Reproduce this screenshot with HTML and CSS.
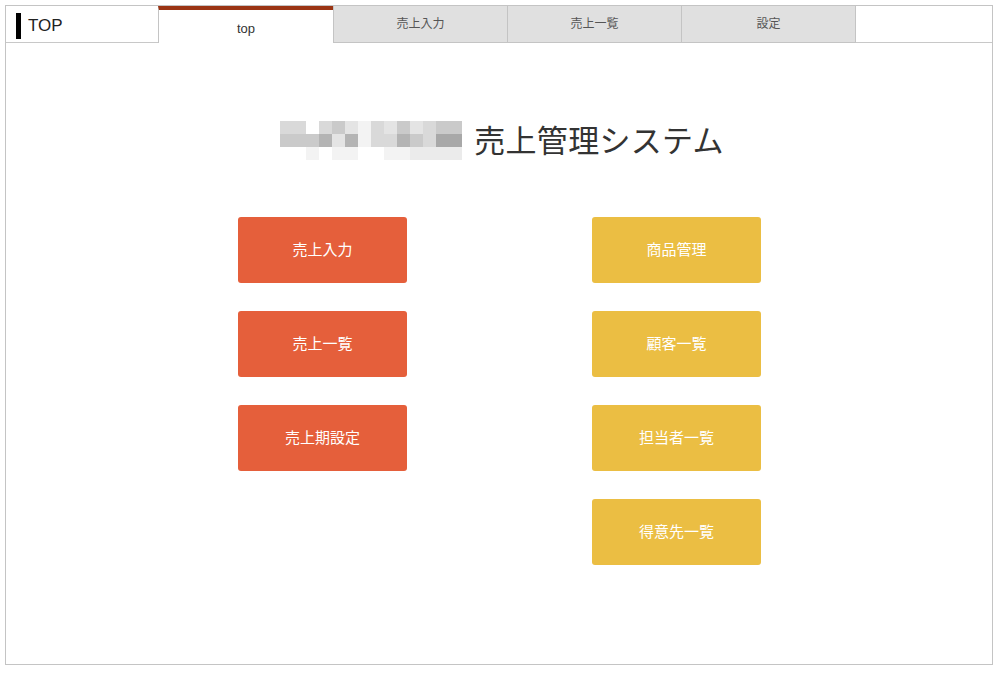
FILE: index.html
```html
<!DOCTYPE html>
<html lang="ja">
<head>
	<meta charset="UTF-8">
	<title>TOP</title>
	<link rel="stylesheet" href="styles.css">
</head>
<body>
	<div class="frame">
		<div class="header">
			<div class="logo"><span class="bar"></span>TOP</div>
			<ul class="tabs">
				<li class="active">top</li>
				<li>売上入力</li>
				<li>売上一覧</li>
				<li>設定</li>
			</ul>
			<div class="rest"></div>
		</div>
		<div class="main">
			<h1 class="title">
				<span class="mosaic">
					<i class="c1"></i><i class="c1"></i><i class="c0"></i><i class="c1"></i><i class="c3"></i><i class="c2"></i><i class="c6"></i><i class="c1"></i><i class="c2"></i><i class="c3"></i><i class="c2"></i><i class="c1"></i><i class="c3"></i><i class="c3"></i>
					<i class="c3"></i><i class="c3"></i><i class="c3"></i><i class="c4"></i><i class="c2"></i><i class="c4"></i><i class="c6"></i><i class="c1"></i><i class="c1"></i><i class="c4"></i><i class="c3"></i><i class="c1"></i><i class="c5"></i><i class="c5"></i>
					<i class="c0"></i><i class="c0"></i><i class="c6"></i><i class="c0"></i><i class="c6"></i><i class="c6"></i><i class="c0"></i><i class="c0"></i><i class="c6"></i><i class="c6"></i><i class="c7"></i><i class="c7"></i><i class="c7"></i><i class="c7"></i>
				</span>
				売上管理システム
			</h1>
			<div class="menu">
				<div class="col">
					<a class="btn red">売上入力</a>
					<a class="btn red">売上一覧</a>
					<a class="btn red">売上期設定</a>
				</div>
				<div class="col">
					<a class="btn yellow">商品管理</a>
					<a class="btn yellow">顧客一覧</a>
					<a class="btn yellow">担当者一覧</a>
					<a class="btn yellow">得意先一覧</a>
				</div>
			</div>
		</div>
	</div>
</body>
</html>
```

FILE: styles.css
```css
body,h1,ul,li{
	margin:0;
	padding:0;
}
body{
	background:#fff;
	padding:5px 7px 7px 5px;
	font-family:"Liberation Sans","Noto Sans CJK JP",sans-serif;
}
.frame{
	border:1px solid #c4c4c4;
	height:658px;
	background:#fff;
}
.header{
	display:flex;
	height:37px;
}
.logo{
	width:152px;
	display:flex;
	align-items:center;
	font-size:17px;
	color:#222;
	border-bottom:1px solid #c8c8c8;
	padding:4px 0 0 10px;
	box-sizing:border-box;
}
.bar{
	display:inline-block;
	width:5px;
	height:26px;
	background:#000;
	margin-right:7px;
}
.tabs{
	display:flex;
	list-style:none;
}
.tabs li{
	width:174px;
	box-sizing:border-box;
	background:#e0e0e0;
	border-left:1px solid #c4c4c4;
	border-bottom:1px solid #c4c4c4;
	font-size:12px;
	color:#555;
	text-align:center;
	line-height:34px;
	font-family:"Noto Sans CJK JP",sans-serif;
}
.tabs li:first-child{
	width:175px;
}
.tabs li:last-child{
	width:175px;
	border-right:1px solid #c4c4c4;
}
.tabs li.active{
	background:#fff;
	border-top:4px solid #9a3413;
	border-bottom:none;
	font-size:13px;
	color:#333;
	line-height:38px;
	font-family:"Liberation Sans",sans-serif;
}
.rest{
	flex:1;
	border-bottom:1px solid #c8c8c8;
}
.main{
	padding-top:75px;
}
.title{
	display:flex;
	justify-content:center;
	align-items:center;
	gap:12px;
	margin-left:6px;
	font-size:31px;
	font-weight:normal;
	color:#333;
	height:40px;
	font-family:"Noto Sans CJK JP",sans-serif;
	letter-spacing:0.3px;
}
.mosaic{
	display:grid;
	grid-template-columns:repeat(14,13px);
	grid-auto-rows:13px;
	margin-top:4px;
}
.mosaic i{display:block;}
.c0{background:#fff;}
.c1{background:#d9d9d9;}
.c2{background:#e4e4e4;}
.c3{background:#cacaca;}
.c4{background:#b4b4b4;}
.c5{background:#a8a8a8;}
.c6{background:#f3f3f3;}
.c7{background:#ebebeb;}
.menu{
	display:flex;
	justify-content:center;
	gap:185px;
	margin-top:59px;
	margin-left:1px;
}
.col{
	display:flex;
	flex-direction:column;
	gap:28px;
}
.btn{
	display:flex;
	width:169px;
	height:66px;
	box-sizing:border-box;
	padding-bottom:3px;
	align-items:center;
	justify-content:center;
	border-radius:3px;
	color:#fff;
	font-size:15px;
	font-family:"Noto Sans CJK JP",sans-serif;
}
.red{background:#e55f3b;}
.yellow{background:#ebbe43;}
```
